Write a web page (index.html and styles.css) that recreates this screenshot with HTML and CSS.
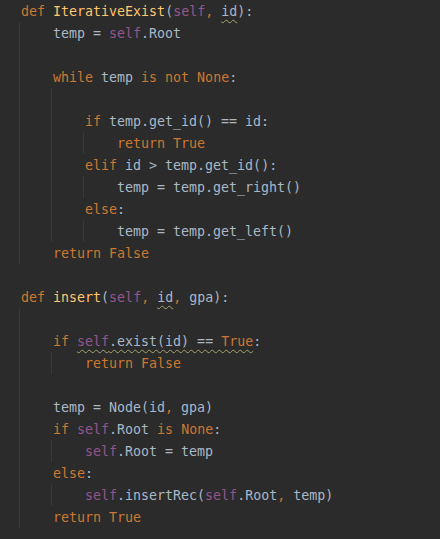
FILE: index.html
```html
<!DOCTYPE html>
<html>
<head>
<meta charset="utf-8">
<link rel="stylesheet" href="styles.css">
</head>
<body>
<div class="editor">
  <div class="line"><span class="c"><span class="kw">def</span> <span class="fn">IterativeExist</span>(<span class="sf">self</span><span class="kw">,</span> <span class="warn">id</span>):</span></div>
  <div class="line"><span class="g"></span><span class="c">temp = <span class="sf">self</span>.Root</span></div>
  <div class="line"><span class="g"></span></div>
  <div class="line"><span class="g"></span><span class="c"><span class="kw">while</span> temp <span class="kw">is not None</span>:</span></div>
  <div class="line"><span class="g"></span><span class="g"></span></div>
  <div class="line"><span class="g"></span><span class="g"></span><span class="c"><span class="kw">if</span> temp.get_id() == id:</span></div>
  <div class="line"><span class="g"></span><span class="g"></span><span class="g"></span><span class="c"><span class="kw">return True</span></span></div>
  <div class="line"><span class="g"></span><span class="g"></span><span class="c"><span class="kw">elif</span> id &gt; temp.get_id():</span></div>
  <div class="line"><span class="g"></span><span class="g"></span><span class="g"></span><span class="c">temp = temp.get_right()</span></div>
  <div class="line"><span class="g"></span><span class="g"></span><span class="c"><span class="kw">else</span>:</span></div>
  <div class="line"><span class="g"></span><span class="g"></span><span class="g"></span><span class="c">temp = temp.get_left()</span></div>
  <div class="line"><span class="g"></span><span class="c"><span class="kw">return False</span></span></div>
  <div class="line"></div>
  <div class="line"><span class="c"><span class="kw">def</span> <span class="fn">insert</span>(<span class="sf">self</span><span class="kw">,</span> <span class="warn">id</span><span class="kw">,</span> gpa):</span></div>
  <div class="line"><span class="g"></span></div>
  <div class="line"><span class="g"></span><span class="c"><span class="kw">if</span> <span class="warn"><span class="sf">self</span>.exist(id) == <span class="kw">True</span></span>:</span></div>
  <div class="line"><span class="g"></span><span class="g"></span><span class="c"><span class="kw">return False</span></span></div>
  <div class="line"><span class="g"></span></div>
  <div class="line"><span class="g"></span><span class="c">temp = Node(id<span class="kw">,</span> gpa)</span></div>
  <div class="line"><span class="g"></span><span class="c"><span class="kw">if</span> <span class="sf">self</span>.Root <span class="kw">is None</span>:</span></div>
  <div class="line"><span class="g"></span><span class="g"></span><span class="c"><span class="sf">self</span>.Root = temp</span></div>
  <div class="line"><span class="g"></span><span class="c"><span class="kw">else</span>:</span></div>
  <div class="line"><span class="g"></span><span class="g"></span><span class="c"><span class="sf">self</span>.insertRec(<span class="sf">self</span>.Root<span class="kw">,</span> temp)</span></div>
  <div class="line"><span class="g"></span><span class="c"><span class="kw">return True</span></span></div>
</div>
</body>
</html>
```

FILE: styles.css
```css
html, body {
  margin: 0;
  padding: 0;
  background: #2b2b2b;
}

.editor {
  display: flex;
  flex-direction: column;
  padding: 0 0 0 19px;
  font-family: "DejaVu Sans Mono", "Liberation Mono", monospace;
  font-size: 13.3px;
  color: #a9b7c6;
}

.line {
  display: flex;
  height: 22px;
  line-height: 22px;
  white-space: pre;
}

.g {
  flex: 0 0 32px;
  width: 32px;
  height: 22px;
  background: linear-gradient(#393939, #393939) no-repeat 0 0 / 1px 100%;
}

.c {
  padding: 1px 0 0 2px;
}

.kw { color: #cc7832; }
.fn { color: #ffc66d; }
.sf { color: #94558d; }

.warn {
  text-decoration: underline wavy #a6a46b;
  text-decoration-thickness: 1px;
  text-underline-offset: 3px;
}
```
